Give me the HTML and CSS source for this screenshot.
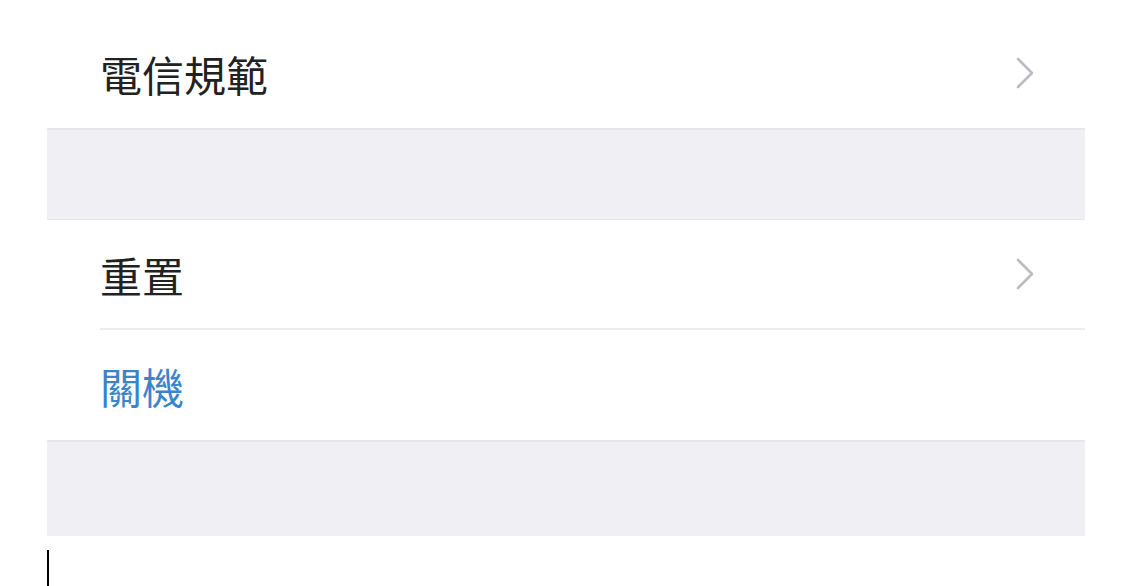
FILE: index.html
```html
<!DOCTYPE html>
<html lang="zh-Hant">

<head>
    <meta charset="UTF-8">
    <meta name="viewport" content="width=device-width, initial-scale=1.0">
    <title>一般</title>
    <link rel="stylesheet" href="styles.css">
</head>

<body>
    <div class="settings">
        <div class="group">
            <div class="row">
                <span class="label">電信規範</span>
                <svg class="chevron" width="20" height="32" viewBox="0 0 20 32">
                    <path d="M3 2 L17 16 L3 30" fill="none" stroke="#bcbcc0" stroke-width="2.6" stroke-linecap="round" stroke-linejoin="round"/>
                </svg>
            </div>
        </div>
        <div class="spacer"></div>
        <div class="group">
            <div class="row inset">
                <span class="label">重置</span>
                <svg class="chevron" width="20" height="32" viewBox="0 0 20 32">
                    <path d="M3 2 L17 16 L3 30" fill="none" stroke="#bcbcc0" stroke-width="2.6" stroke-linecap="round" stroke-linejoin="round"/>
                </svg>
            </div>
            <div class="row">
                <span class="label action">關機</span>
            </div>
        </div>
        <div class="spacer bottom"></div>
    </div>
    <div class="caret"></div>
</body>

</html>
```

FILE: styles.css
```css
body {
    margin: 0;
    padding: 0;
    background: #ffffff;
    font-family: "Noto Sans CJK TC", "Noto Sans", sans-serif;
}

.settings {
    width: 1038px;
    margin-left: 47px;
    padding-top: 18px;
}

.group {
    background: #ffffff;
}

.row {
    height: 110px;
    display: flex;
    align-items: center;
    justify-content: space-between;
    padding: 0 50px 0 53px;
    box-sizing: border-box;
}

.inset {
    margin-left: 53px;
    padding-left: 0;
    border-bottom: 2px solid #ececee;
}

.label {
    font-size: 42px;
    color: #222222;
}

.action {
    color: #3a84cc;
}

.chevron {
    display: block;
}

.spacer {
    height: 89px;
    background: #efeff4;
    border-top: 2px solid #e6e6ea;
    border-bottom: 1px solid #e9e9ec;
}

.spacer.bottom {
    height: 94px;
    border-bottom: none;
}

.caret {
    width: 2px;
    height: 36px;
    margin: 14px 0 0 47px;
    background: #000000;
}
```
